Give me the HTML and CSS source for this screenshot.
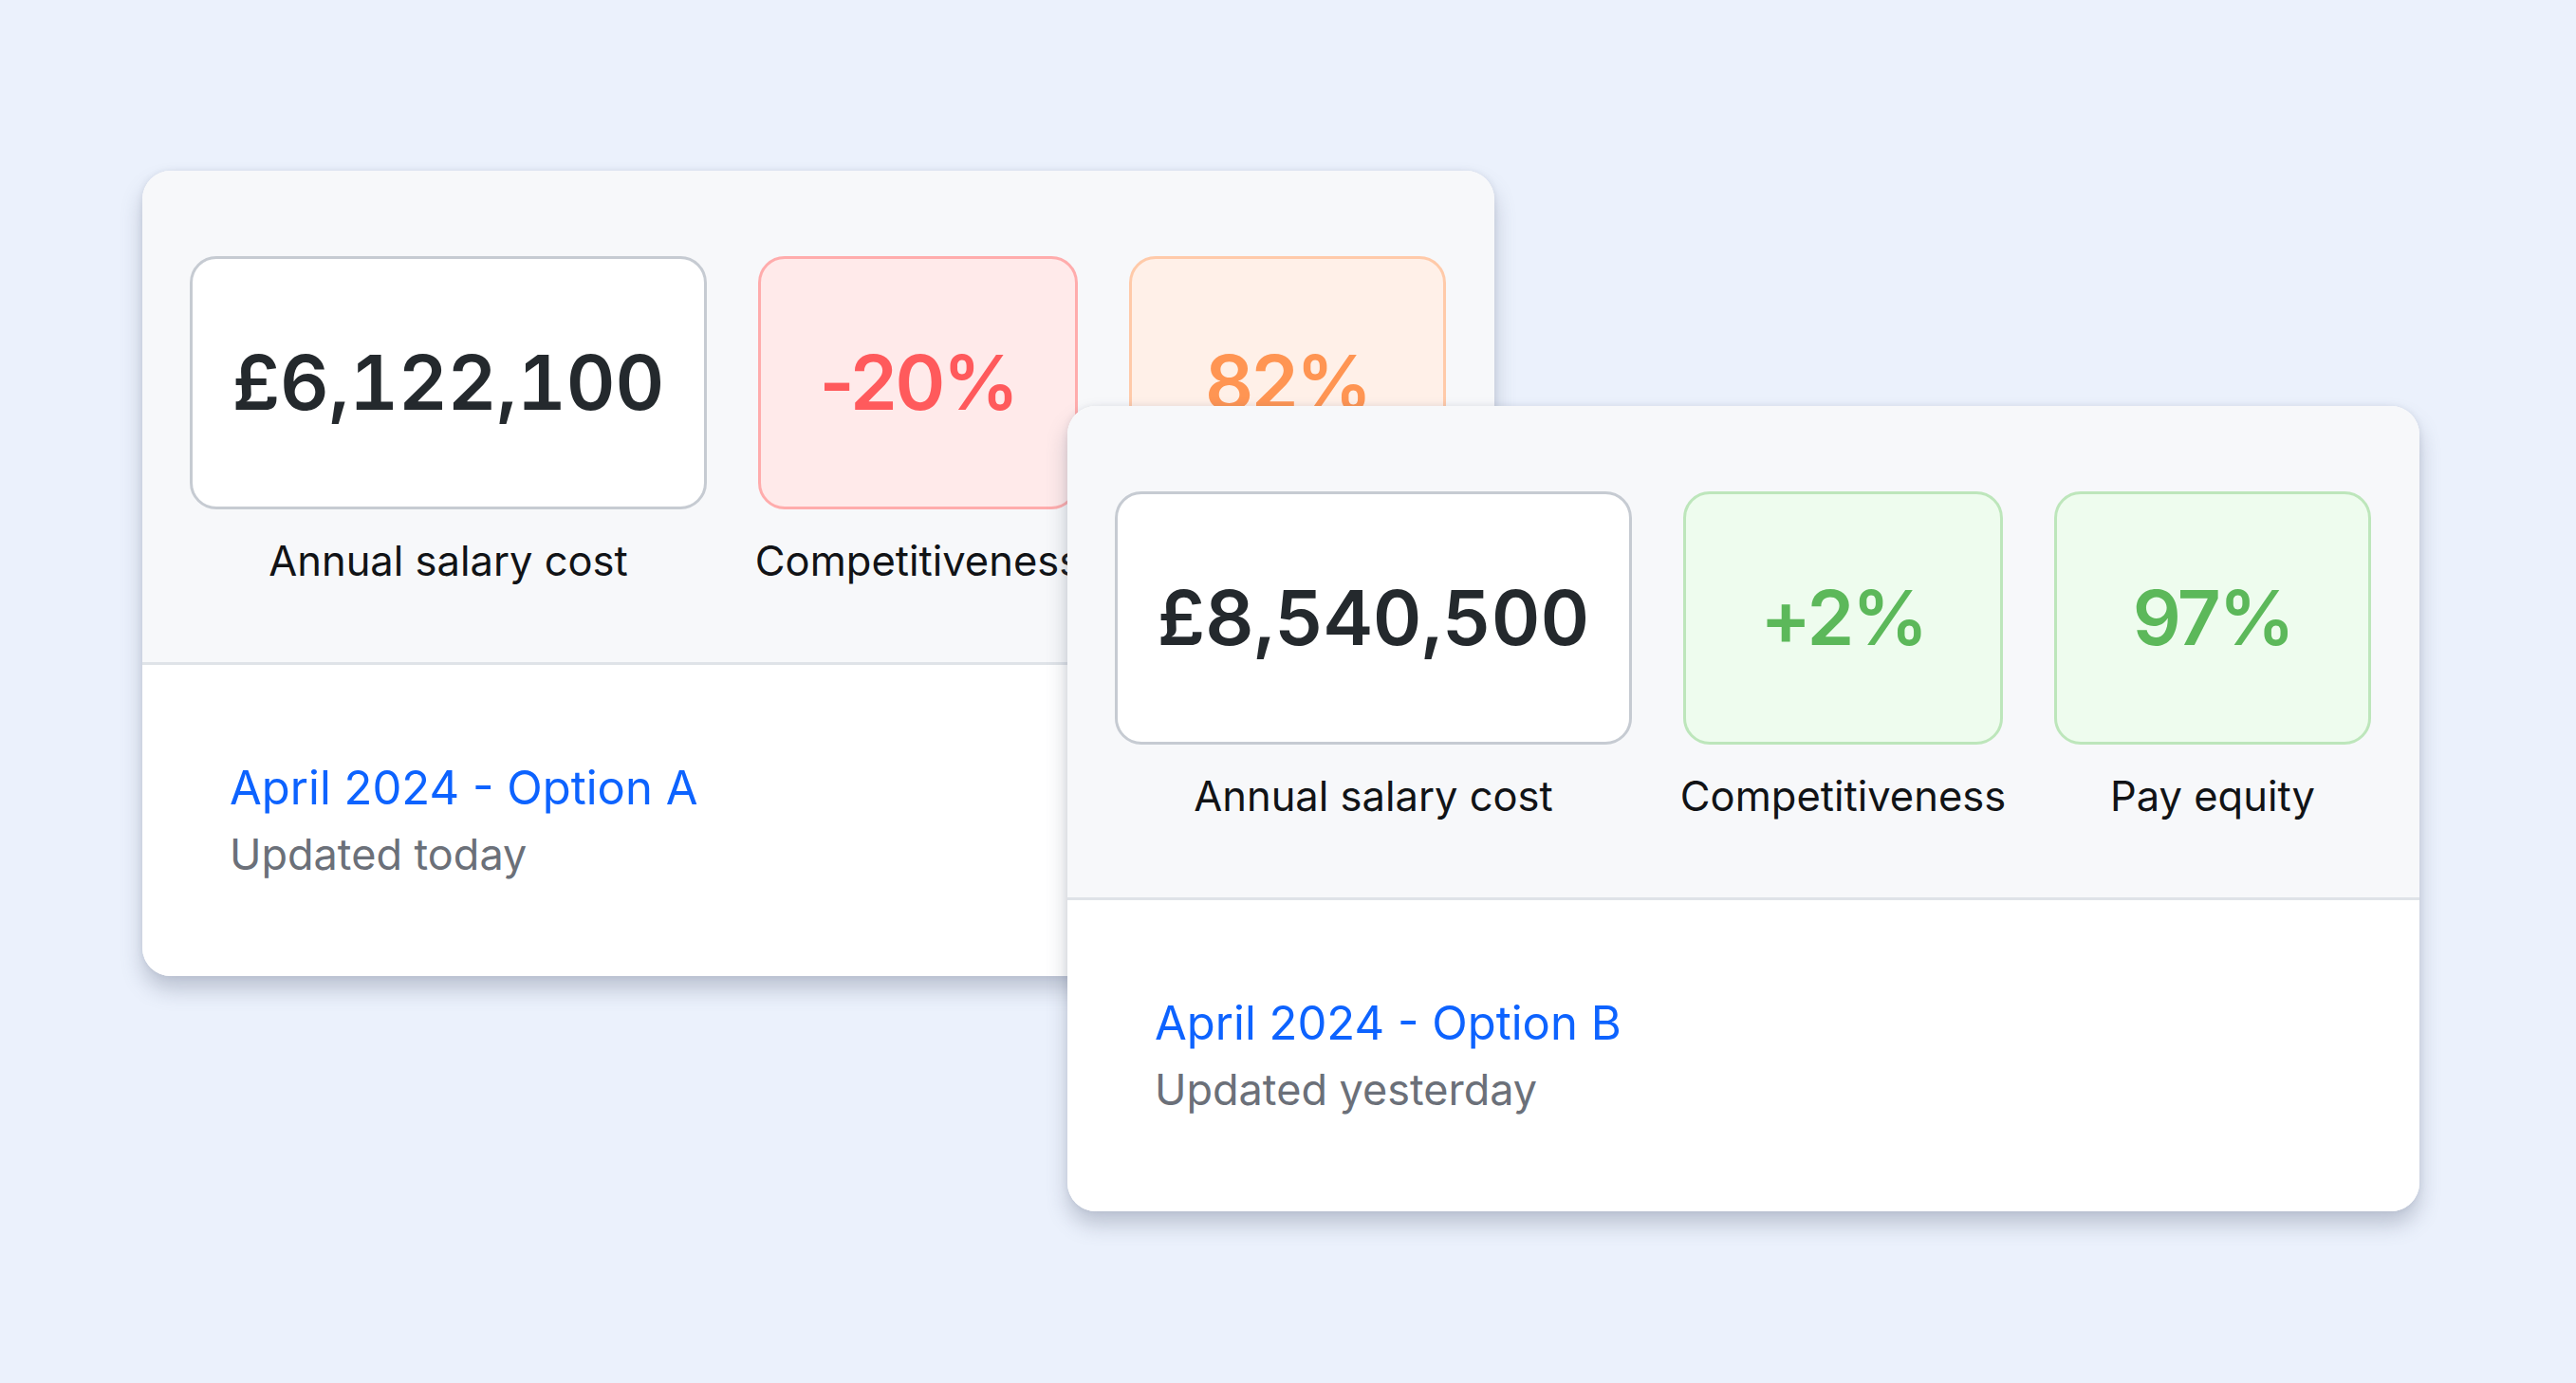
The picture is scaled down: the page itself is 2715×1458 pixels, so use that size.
FILE: index.html
```
<!DOCTYPE html>
<html lang="en">
<head>
<meta charset="utf-8">
<title>Salary options</title>
<link rel="stylesheet" href="styles.css">
</head>
<body>
<main class="canvas">
  <section class="card card-a">
    <div class="card-top">
      <div class="metric metric-cost">
        <div class="box box-neutral"><span class="value">£6,122,100</span></div>
        <div class="label">Annual salary cost</div>
      </div>
      <div class="metric metric-comp">
        <div class="box box-red"><span class="value">-20%</span></div>
        <div class="label">Competitiveness</div>
      </div>
      <div class="metric metric-equity">
        <div class="box box-orange"><span class="value">82%</span></div>
        <div class="label">Pay equity</div>
      </div>
    </div>
    <div class="card-bottom">
      <div class="title">April 2024 - Option A</div>
      <div class="subtitle">Updated today</div>
    </div>
  </section>
  <section class="card card-b">
    <div class="card-top">
      <div class="metric metric-cost">
        <div class="box box-neutral"><span class="value">£8,540,500</span></div>
        <div class="label">Annual salary cost</div>
      </div>
      <div class="metric metric-comp">
        <div class="box box-green"><span class="value">+2%</span></div>
        <div class="label">Competitiveness</div>
      </div>
      <div class="metric metric-equity">
        <div class="box box-green"><span class="value">97%</span></div>
        <div class="label">Pay equity</div>
      </div>
    </div>
    <div class="card-bottom">
      <div class="title">April 2024 - Option B</div>
      <div class="subtitle">Updated yesterday</div>
    </div>
  </section>
</main>
</body>
</html>
```
FILE: styles.css
```
html, body {
  margin: 0;
  padding: 0;
}
body {
  background: #ebf1fc;
  font-family: Inter, "Liberation Sans", sans-serif;
  width: 2715px;
  height: 1458px;
  overflow: hidden;
}
.canvas {
  position: relative;
  width: 2715px;
  height: 1458px;
}
.card {
  position: absolute;
  width: 1425px;
  height: 849px;
  border-radius: 30px;
  background: #ffffff;
  overflow: hidden;
  box-shadow: 0 14px 22px rgba(90, 100, 125, 0.32), 0 0 6px rgba(90, 100, 125, 0.12);
  display: flex;
  flex-direction: column;
}
.card-a {
  left: 150px;
  top: 180px;
}
.card-b {
  left: 1125px;
  top: 428px;
}
.card-top {
  background: #f7f8fa;
  height: 521px;
  box-sizing: border-box;
  padding: 90px 50px 0 50px;
  display: flex;
  gap: 54px;
  border-bottom: 3px solid #dfe3e8;
}
.metric {
  display: flex;
  flex-direction: column;
  align-items: center;
}
.metric-cost { width: 545px; }
.metric-comp { width: 337px; }
.metric-equity { width: 334px; }
.box {
  width: 100%;
  height: 267px;
  box-sizing: border-box;
  border: 3px solid #c6cbd2;
  border-radius: 28px;
  background: #ffffff;
  display: flex;
  align-items: center;
  justify-content: center;
}
.value {
  font-size: 80px;
  font-weight: 600;
  line-height: 1.21;
  color: #24292d;
  white-space: nowrap;
  letter-spacing: -2.5px;
}
.box-neutral .value {
  font-variant-numeric: tabular-nums;
  letter-spacing: 0;
}
.box-red {
  background: #ffeaea;
  border-color: #ffacac;
}
.box-red .value { color: #ff5a5c; }
.box-orange {
  background: #fff0e8;
  border-color: #ffcaa9;
}
.box-orange .value { color: #ff9553; }
.box-green {
  background: #eefcee;
  border-color: #bde6bb;
}
.box-green .value { color: #5cb85a; }
.label {
  margin-top: 28px;
  font-size: 43.5px;
  line-height: 52px;
  color: #111316;
  white-space: nowrap;
}
.card-bottom {
  flex: 1;
  background: #ffffff;
  padding: 100px 92px 0 92px;
}
.title {
  font-size: 49px;
  line-height: 60px;
  color: #0d63ff;
}
.subtitle {
  margin-top: 10px;
  font-size: 45px;
  line-height: 60px;
  color: #6b7079;
}
```
